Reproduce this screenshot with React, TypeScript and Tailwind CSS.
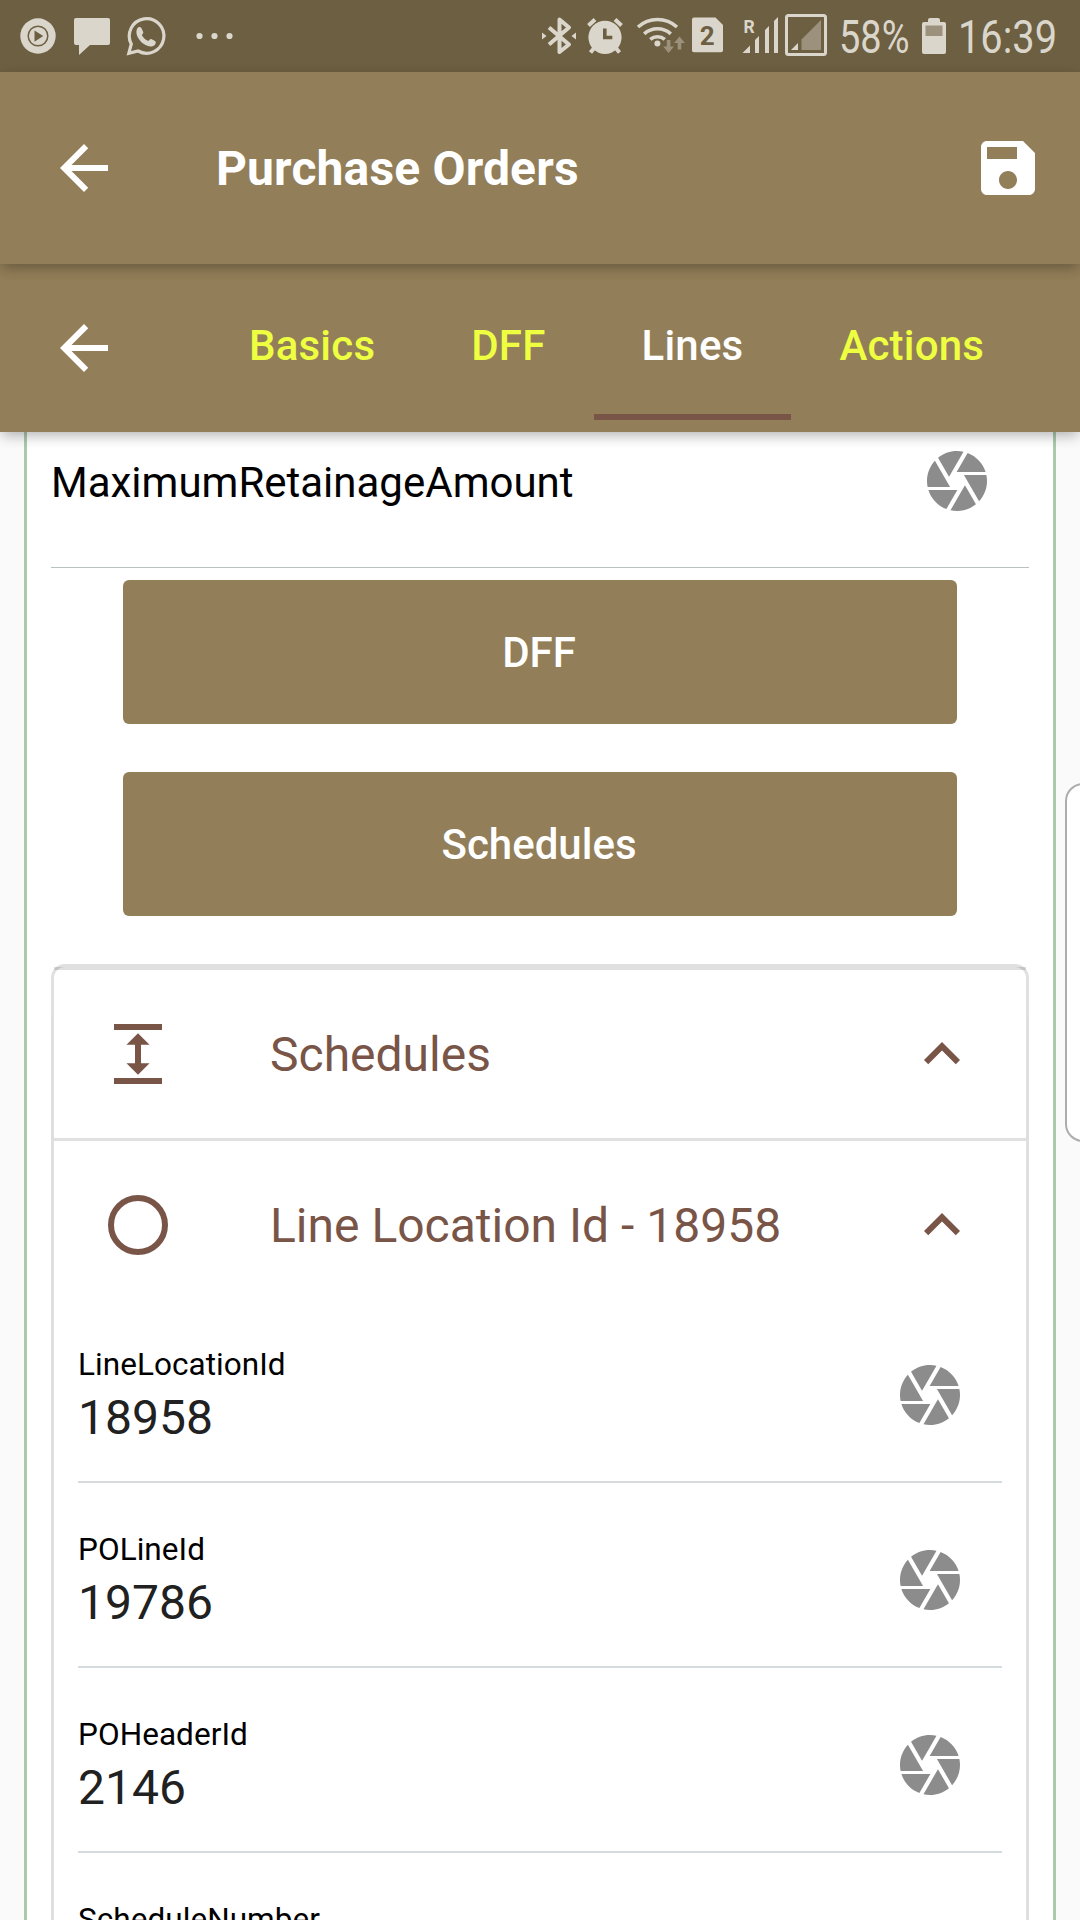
import React from "react";

const LIGHT = "#dbd6cc";
const DIM = "#9c917d";
const BAR = "#6d5f41";

/* A slice of the 72px status bar, drawn in status-bar coordinates. */
function Slice({ x, w, children }: { x: number; w: number; children?: React.ReactNode }) {
  return (
    <svg width={w} height={72} viewBox={`${x} 0 ${w} 72`} className="block shrink-0" fill={LIGHT}>
      {children}
    </svg>
  );
}

function StatusBar() {
  return (
    <div className="flex h-[72px] shrink-0 items-center justify-between bg-[#6d5f41] text-[#dbd6cc]">
      <div className="flex">
        <Slice x={0} w={66}>
          <circle cx={38} cy={36} r={17.7} />
          <circle cx={38} cy={36} r={9.8} fill="none" stroke={BAR} strokeWidth={1.5} />
          <path d="M34.5 30.5v11.2l8.7-5.6z" fill={BAR} />
        </Slice>
        <Slice x={66} w={54}>
          <path d="M76 18h32a2 2 0 0 1 2 2v23a2 2 0 0 1-2 2H90L79 55V45h-3a2 2 0 0 1-2-2V20a2 2 0 0 1 2-2z" />
        </Slice>
        <Slice x={120} w={60}>
          <path
            d="M128.8 53.3l2.5-9.3a17.3 17.3 0 1 1 6.8 7z"
            fill="none"
            stroke={LIGHT}
            strokeWidth={3.2}
          />
          <path d="M137.5 28c1-1.5 3-1.5 4 .3l1.7 3.6c.5 1-.6 2-1.4 3 1.5 3 3.7 4.7 6.6 6 1-1 1.8-2.3 2.9-1.8l3.7 1.9c1.2.7.9 2.4.1 3.5-1.5 2-4.5 2.5-7 1.6-5.6-2-9-5.6-11-10.3-1-2.5-1-5.8.4-7.8z" />
        </Slice>
        <Slice x={180} w={60}>
          <circle cx={199.5} cy={36} r={3.1} />
          <circle cx={214.5} cy={36} r={3.1} />
          <circle cx={229.5} cy={36} r={3.1} />
        </Slice>
      </div>
      <div className="flex items-center">
        <Slice x={536} w={46}>
          <path
            d="M549 27.5 569 44.5 559.5 52V19.5L569 27.5 549 44.5"
            fill="none"
            stroke={LIGHT}
            strokeWidth={4}
            strokeLinejoin="round"
          />
          <path d="M542 32.5l4.5 3.5-4.5 3.5zM576 32.5l-4.5 3.5 4.5 3.5z" />
        </Slice>
        <Slice x={582} w={48}>
          <circle cx={605} cy={37.3} r={16.6} />
          <path
            d="M588.5 25.5l6.5-6M615 19.5l6.5 6M595 47l-4.5 5.5M615 47l4.5 5.5"
            stroke={LIGHT}
            strokeWidth={4}
          />
          <path d="M604.8 28.5v9h7.5" fill="none" stroke={BAR} strokeWidth={3.6} />
        </Slice>
        <Slice x={630} w={58}>
          <g fill="none" stroke={LIGHT} strokeWidth={3.6}>
            <path d="M638 27a29 29 0 0 1 39 0" />
            <path d="M644.2 33.8a20 20 0 0 1 26.6 0" />
            <path d="M650.2 39.3a11.5 11.5 0 0 1 14.6 0" />
          </g>
          <circle cx={657.4} cy={43.6} r={3} />
          <path
            d="M666.8 40h3.6v6.5h3.6l-5.4 6.5-5.4-6.5h3.6zM677.7 49.5h3.6V43h3.6l-5.4-6.5-5.4 6.5h3.6z"
            fill={DIM}
          />
        </Slice>
        <Slice x={688} w={46}>
          <path d="M694 17.5h21.5l7.5 7.5v25.2a2 2 0 0 1-2 2h-27a2 2 0 0 1-2-2V19.5a2 2 0 0 1 2-2z" />
          <text x={707.3} y={45} fontSize={26} fontWeight={700} textAnchor="middle" fill={BAR} fontFamily="Roboto">
            2
          </text>
        </Slice>
        <Slice x={734} w={48}>
          <text x={743.5} y={32.5} fontSize={17.5} fontWeight={700} fontFamily="Roboto">
            R
          </text>
          <path d="M742.5 53h7.5v-7.5zM755 53v-13l4-4v17zM765 53V30l4-4v27zM774 53V21l4-4v36z" />
        </Slice>
        <Slice x={782} w={57}>
          <rect x={786.5} y={15.5} width={39} height={39} rx={2} fill="none" stroke={LIGHT} strokeWidth={3} />
          <path d="M791 50h7v-7z" />
          <path d="M801.5 50V39.5L821 20v30z" fill={DIM} />
        </Slice>
        <div className="flex h-[72px] w-[75px] items-center pt-px">
          <span className="origin-left scale-x-[0.825] text-[46px] leading-[72px]">58%</span>
        </div>
        <Slice x={914} w={44}>
          <path d="M930 18h8a2 2 0 0 1 2 2v2h4a2 2 0 0 1 2 2v28a2 2 0 0 1-2 2h-20a2 2 0 0 1-2-2V24a2 2 0 0 1 2-2h4v-2a2 2 0 0 1 2-2z" />
          <path d="M925.5 25.5h17v10.5h-17z" fill={DIM} />
        </Slice>
        <div className="flex h-[72px] w-[122px] items-center pt-px">
          <span className="origin-left scale-x-[0.865] text-[46px] leading-[72px]">16:39</span>
        </div>
      </div>
    </div>
  );
}

type IconProps = { className?: string };

function Icon({ className = "", children }: IconProps & { children: React.ReactNode }) {
  return (
    <svg viewBox="0 0 24 24" width={72} height={72} fill="currentColor" className={`block shrink-0 ${className}`}>
      {children}
    </svg>
  );
}

const BackIcon = (p: IconProps) => (
  <Icon {...p}>
    <path d="M20 11H7.83l5.59-5.59L12 4l-8 8 8 8 1.41-1.41L7.83 13H20v-2z" />
  </Icon>
);

const SaveIcon = (p: IconProps) => (
  <Icon {...p}>
    <path d="M17 3H5c-1.11 0-2 .9-2 2v14c0 1.1.89 2 2 2h14c1.1 0 2-.9 2-2V7l-4-4zm-5 16c-1.66 0-3-1.34-3-3s1.34-3 3-3 3 1.34 3 3-1.34 3-3 3zm3-10H5V5h10v4z" />
  </Icon>
);

const CameraIcon = (p: IconProps) => (
  <Icon {...p} className={`text-[#8c8c8c] ${p.className ?? ""}`}>
    <path d="M9.4 10.5l4.77-8.26C13.47 2.09 12.75 2 12 2c-2.4 0-4.6.85-6.32 2.25l3.66 6.35.06-.1zM21.54 9c-.92-2.92-3.15-5.26-6-6.34L11.88 9h9.66zm.26 1h-7.49l.29.5 4.76 8.25C21 16.97 22 14.61 22 12c0-.69-.07-1.35-.2-2zM8.54 12l-3.9-6.75C3.01 7.03 2 9.39 2 12c0 .69.07 1.35.2 2h7.49l-1.15-2zm-6.08 3c.92 2.92 3.15 5.26 6 6.34L12.12 15H2.46zm11.27 0l-3.9 6.76c.7.15 1.42.24 2.17.24 2.4 0 4.6-.85 6.32-2.25l-3.66-6.35-.93 1.6z" />
  </Icon>
);

const ExpandIcon = (p: IconProps) => (
  <Icon {...p}>
    <path d="M4 2h16v2H4zM4 20h16v2H4zM13 8.95h2.85L12 5.1 8.15 8.95H11v6.1H8.15L12 18.9l3.85-3.85H13z" />
  </Icon>
);

const CircleIcon = (p: IconProps) => (
  <Icon {...p}>
    <circle cx={12} cy={12} r={9} fill="none" stroke="currentColor" strokeWidth={2} />
  </Icon>
);

const ChevronUpIcon = (p: IconProps) => (
  <Icon {...p}>
    <path d="M12 8l-6 6 1.41 1.41L12 10.83l4.59 4.58L18 14z" />
  </Icon>
);

function Tab({ label, active }: { label: string; active?: boolean }) {
  return (
    <div
      className={`h-[156px] px-12 text-[42px] leading-[164px] font-medium tracking-[0.2px] ${
        active ? "border-b-[6px] border-[#795548] text-white" : "text-[#eeff41]"
      }`}
    >
      {label}
    </div>
  );
}

function ActionButton({ label, className }: { label: string; className: string }) {
  return (
    <button
      className={`mx-[72px] block h-[144px] shrink-0 rounded-[6px] bg-[#927e58] pt-px pr-[2px] text-center text-[42px] leading-[144px] font-medium text-white ${className}`}
    >
      {label}
    </button>
  );
}

function PanelRow({
  icon,
  title,
  className,
}: {
  icon: React.ReactNode;
  title: string;
  className: string;
}) {
  return (
    <div className={`flex shrink-0 items-center pr-12 pl-12 text-[#795548] ${className}`}>
      {icon}
      <span className="ml-24 flex-1 pt-[2px] text-[48px] leading-[60px]">{title}</span>
      <ChevronUpIcon />
    </div>
  );
}

function Field({ label, value }: { label: string; value?: string }) {
  return (
    <div className="mx-6 flex h-[185px] shrink-0 items-start border-b-2 border-[#d6dcde]">
      <div className="flex-1 pt-[47px]">
        <div className="text-[31.5px] leading-[40px] tracking-[0.05px] text-black">{label}</div>
        <div className="mt-[3px] text-[48px] leading-[60px] text-[#212121]">{value}</div>
      </div>
      <CameraIcon className="mt-[61px] mr-9" />
    </div>
  );
}

const fields = [
  { label: "LineLocationId", value: "18958" },
  { label: "POLineId", value: "19786" },
  { label: "POHeaderId", value: "2146" },
  { label: "ScheduleNumber" },
];

export default function App() {
  return (
    <div className="relative flex h-[1920px] w-[1080px] flex-col overflow-hidden bg-[#fafafa] font-['Roboto',sans-serif]">
      <StatusBar />
      <header className="z-20 flex h-[192px] shrink-0 items-center bg-[#927e58] px-9 text-white shadow-[0_6px_12px_-3px_rgba(0,0,0,0.2),0_4px_14px_rgba(0,0,0,0.12)]">
        <BackIcon className="ml-3" />
        <h1 className="ml-24 flex-1 pt-[2px] text-[48px] leading-[60px] font-bold tracking-[0.15px]">Purchase Orders</h1>
        <SaveIcon />
      </header>
      <nav className="z-10 flex h-[168px] shrink-0 bg-[#927e58] pl-12 shadow-[0_6px_12px_-3px_rgba(0,0,0,0.2),0_4px_14px_rgba(0,0,0,0.12)]">
        <BackIcon className="mt-12 text-white" />
        <div className="ml-[81px] flex">
          <Tab label="Basics" />
          <Tab label="DFF" />
          <Tab label="Lines" active />
          <Tab label="Actions" />
        </div>
      </nav>

      <main className="mx-6 flex h-[1488px] shrink-0 flex-col overflow-hidden border-x-[3px] border-[#abc9ad] bg-white px-6">
        <div className="flex h-[136px] shrink-0 items-start border-b border-[#b9c1c1]">
          <span className="mt-[21px] flex-1 text-[42px] leading-[60px] text-black">MaximumRetainageAmount</span>
          <CameraIcon className="mt-[13px] mr-9" />
        </div>
        <ActionButton label="DFF" className="mt-[12.3px]" />
        <ActionButton label="Schedules" className="mt-[48px]" />

        <section className="mt-[47.7px] flex h-[1100px] shrink-0 flex-col rounded-t-[14px] border-x-[3px] border-t-[3px] border-black/12">
          <PanelRow icon={<ExpandIcon />} title="Schedules" className="h-[174px] border-y-[3px] border-black/12" />
          <PanelRow icon={<CircleIcon />} title="Line Location Id - 18958" className="h-[168px]" />
          <div className="-mt-[11px] flex flex-col">
            {fields.map((f) => (
              <Field key={f.label} label={f.label} value={f.value} />
            ))}
          </div>
        </section>
      </main>

      {/* Edge handle */}
      <div className="absolute top-[783px] -right-[24px] z-30 h-[359px] w-[39px] rounded-[18px] border-2 border-[#adadad] bg-white" />
    </div>
  );
}
